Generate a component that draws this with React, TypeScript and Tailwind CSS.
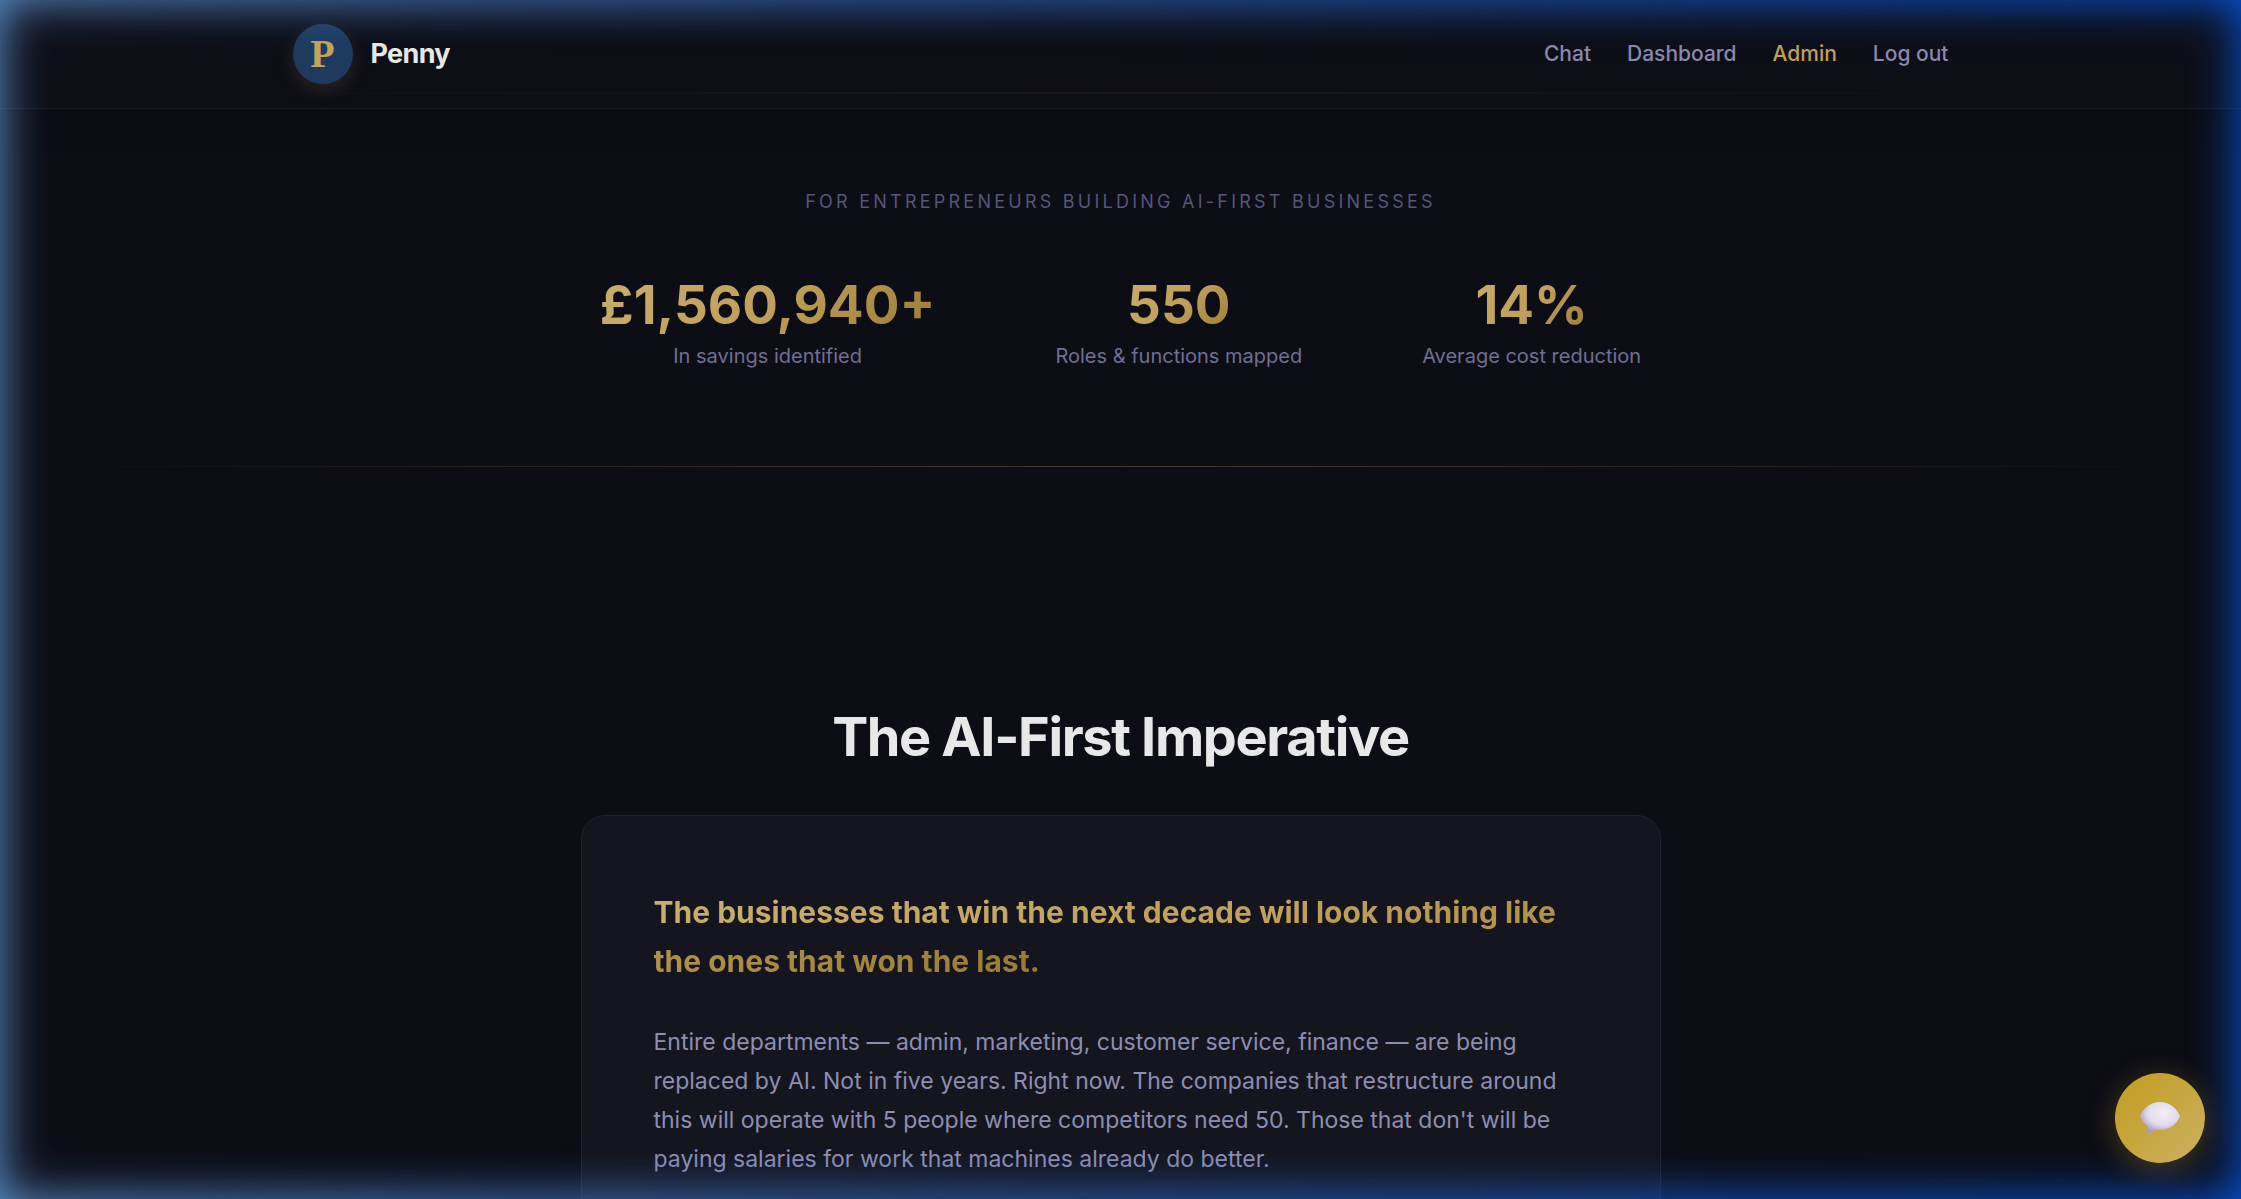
const navLinks = [
  { label: "Chat", active: false },
  { label: "Dashboard", active: false },
  { label: "Admin", active: true },
];

const stats = [
  { value: "£1,560,940+", label: "In savings identified" },
  { value: "550", label: "Roles & functions mapped" },
  { value: "14%", label: "Average cost reduction" },
];

const goldText =
  "bg-[linear-gradient(135deg,#c9ae6c_0%,#c0a05a_50%,#9a7b32_100%)] bg-clip-text text-transparent";

function Header() {
  return (
    <header className="relative z-10 shrink-0 border-b border-[#1c1c26] bg-[#0e0e17] shadow-[0_6px_36px_rgba(0,0,0,0.2)]">
      <div className="mx-auto flex h-[108px] max-w-[1800px] items-center justify-between px-[72px]">
        <a href="#home" className="flex items-center gap-[18px]">
          <span className="flex size-[60px] items-center justify-center rounded-full bg-[#1e3a5f] font-['Liberation_Serif',serif] text-[40px] leading-none font-bold text-[#c4a35a] shadow-[0_6px_18px_rgba(201,169,98,0.15)]">
            P
          </span>
          <span className="text-[27px] leading-9 font-bold tracking-tight text-[#e8e8e8]">
            Penny
          </span>
        </a>
        <nav className="flex items-center gap-9 text-[21px] leading-8 font-medium text-[#8b89ae]">
          {navLinks.map((link) => (
            <a
              key={link.label}
              href={`#${link.label.toLowerCase()}`}
              className={link.active ? "text-[#c0a05a]" : ""}
            >
              {link.label}
            </a>
          ))}
          <button type="button">Log out</button>
        </nav>
      </div>
      <div className="absolute inset-x-0 bottom-3.5 h-0.5 bg-[linear-gradient(90deg,transparent_5%,#1a161c_50%,transparent_95%)]" />
    </header>
  );
}

function Stats() {
  return (
    <section className="flex shrink-0 flex-col items-center pt-[78px] text-center">
      <p className="text-[18px] leading-[30px] tracking-[0.18em] text-[#57557b] uppercase">
        For entrepreneurs building AI-first businesses
      </p>
      <dl className="mt-[54px] flex justify-center gap-[120px]">
        {stats.map((stat) => (
          <div key={stat.label} className="flex flex-col-reverse items-center">
            <dt className="text-[20px] leading-[34px] text-[#716f94]">{stat.label}</dt>
            <dd className={`text-[53px] leading-[68px] font-bold ${goldText}`}>{stat.value}</dd>
          </div>
        ))}
      </dl>
      <div className="mt-[93px] h-px w-full bg-[linear-gradient(90deg,transparent_2%,#483a28_50%,transparent_98%)]" />
    </section>
  );
}

function Imperative() {
  return (
    <section className="mx-auto w-full max-w-[1080px] shrink-0 pt-[236px]">
      <h2 className="text-center text-[54px] leading-[68px] font-bold tracking-tight text-[#e8e8e8]">
        The AI-First Imperative
      </h2>
      <article className="mt-11 rounded-3xl border border-[#22222c] bg-[#15151f] p-[72px]">
        <p className="text-[30px] leading-[49px] font-bold">
          <span className={goldText}>
            The businesses that win the next decade will look nothing like the ones that won the
            last.
          </span>
        </p>
        <p className="mt-[37px] text-[23px] leading-[39px] text-[#8f8db2]">
          Entire departments — admin, marketing, customer service, finance — are being replaced by
          AI. Not in five years. Right now. The companies that restructure around this will operate
          with 5 people where competitors need 50. Those that don't will be paying salaries for
          work that machines already do better.
        </p>
      </article>
    </section>
  );
}

function ChatButton() {
  return (
    <button
      type="button"
      aria-label="Open chat"
      className="fixed right-9 bottom-9 z-40 flex size-[90px] items-center justify-center rounded-full bg-[linear-gradient(135deg,#c4a02c_20%,#ccb062)] shadow-[0_6px_30px_rgba(201,162,39,0.3)]"
    >
      <svg viewBox="0 0 40 32" className="h-8 w-10" aria-hidden="true">
        <defs>
          <radialGradient id="bubble" cx="0.58" cy="0.35" r="0.65">
            <stop offset="0" stopColor="#f2eef5" />
            <stop offset="0.6" stopColor="#e3dbeb" />
            <stop offset="1" stopColor="#a999ca" />
          </radialGradient>
        </defs>
        <path
          d="M20 0C11 0 4 5.500 0 14c1.600 4.700 4.200 8 7.600 10.200.7 2 .5 4.200.2 6.200-.1.800.5 1 1.200.8 2.300-1 4.200-2.200 6-3.700 1.600.3 3.300.4 5 .4 9.500 0 16.500-4.500 20-13.900C36 5.500 29 0 20 0Z"
          fill="url(#bubble)"
        />
      </svg>
    </button>
  );
}

function EdgeGlow() {
  return (
    <div className="pointer-events-none fixed inset-0 z-30" aria-hidden="true">
      <div className="absolute inset-0 shadow-[inset_0_0_48px_#6198d6] [mask-image:linear-gradient(90deg,#000,transparent)]" />
      <div className="absolute inset-0 shadow-[inset_0_0_48px_#0558e6] [mask-image:linear-gradient(90deg,transparent,#000)]" />
    </div>
  );
}

export default function App() {
  return (
    <div className="flex h-screen flex-col overflow-hidden bg-[#0d0d16] font-['Inter',sans-serif]">
      <Header />
      <main className="flex flex-col">
        <Stats />
        <Imperative />
      </main>
      <ChatButton />
      <EdgeGlow />
    </div>
  );
}
